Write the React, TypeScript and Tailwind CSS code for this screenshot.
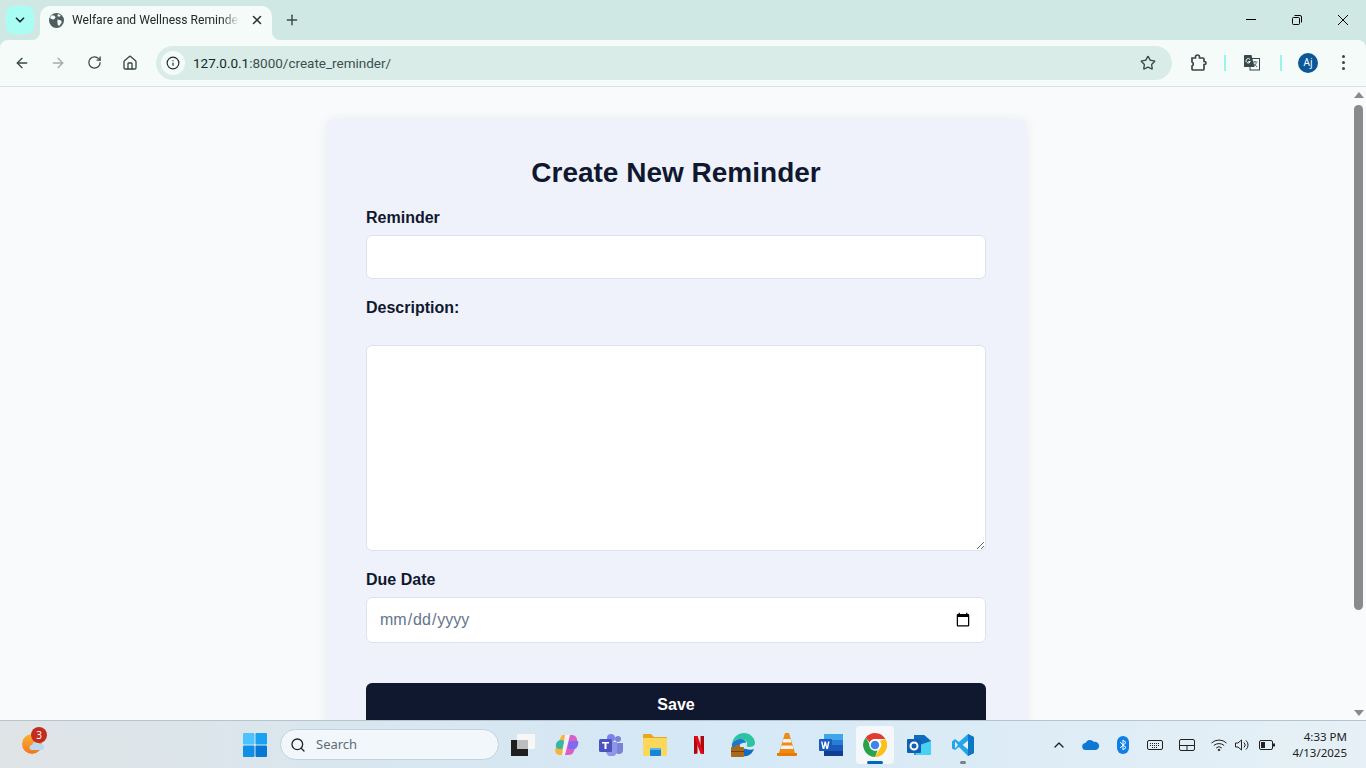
// Chrome window with the create reminder form, on a Windows 11 taskbar

import type { ReactNode } from 'react';
import { Star, Search, ChevronDown, ChevronUp, X, Plus, ArrowLeft, ArrowRight, RotateCw, Home, Info } from 'lucide-react';

const font = { sans: 'font-["Liberation_Sans",Arial,sans-serif]', ui: 'font-["Noto_Sans","Open_Sans",sans-serif]' };

function BrowserChrome() {
  return (
    <header className="shrink-0 text-[#1f2d2d] bg-[#cfe8e3]">
      {/* Tab strip */}
      <div className="h-10 flex items-start pl-[6px]">
        <button className="w-[28px] h-[28px] mt-[6px] rounded-lg bg-[#a9fdf3] flex items-center justify-center">
          <ChevronDown size={14} strokeWidth={3} className="text-[#1b2a2a]" />
        </button>
        <div className="relative ml-[6px] mt-[6px] w-[232px] h-[34px] bg-[#f5fbf9] rounded-t-[10px] flex items-center pl-[8px] pr-[8px] pb-[6px]">
          <svg width="8" height="8" viewBox="0 0 8 8" className="absolute left-[-8px] bottom-0"><path d="M8 0v8H0a8 8 0 0 0 8-8z" fill="#f5fbf9" /></svg>
          <svg width="8" height="8" viewBox="0 0 8 8" className="absolute right-[-8px] bottom-0"><path d="M0 0v8h8a8 8 0 0 1-8-8z" fill="#f5fbf9" /></svg>
          <svg width="15" height="15" viewBox="0 0 16 16" className="ml-[1px] shrink-0">
            <circle cx="8" cy="8" r="8" fill="#4f5d5f" />
            <path d="M3 2.500l3 .5 1 2-2 2-2.500-.5L1 5zM9 7l4 1 .5 2.500-2.500 3-1.500-.5-.5-3zM9.500 1l3 1.500L11.500 4 9 3.500z" fill="#f5fbf9" />
          </svg>
          <span className="ml-[8px] w-[167px] overflow-hidden whitespace-nowrap text-[12.1px] text-[#202a2a] font-['Roboto',sans-serif] [mask-image:linear-gradient(to_right,black_90%,transparent)]">
            Welfare and Wellness Reminder
          </span>
          <X size={14} strokeWidth={2.6} className="ml-auto text-[#263434]" />
        </div>
        <Plus size={16} strokeWidth={2.2} className="ml-[12px] mt-[12px] text-[#3b4c4c]" />
        {/* Window controls */}
        <div className="ml-auto flex items-center h-10 text-black">
          <svg width="10" height="10" viewBox="0 0 10 10" className="mr-[36px]"><path d="M0 4.500h10" stroke="currentColor" strokeWidth="1" /></svg>
          <svg width="10" height="10" viewBox="0 0 10 10" className="mr-[36px]" fill="none" stroke="currentColor"><rect x=".5" y="2.500" width="7" height="7" rx="1" /><path d="M2.500 .5h5.500a1.500 1.500 0 0 1 1.500 1.500v5.500" /></svg>
          <svg width="10" height="10" viewBox="0 0 10 10" className="mr-[18px]"><path d="M0 0l10 10M10 0L0 10" stroke="currentColor" strokeWidth="1" /></svg>
        </div>
      </div>
      {/* Toolbar */}
      <div className="h-[47px] bg-[#f5fbf9] rounded-t-[8px] border-b border-[#d5e2df] flex items-center pl-[14px] pb-[1px]">
        <ArrowLeft size={16} strokeWidth={2} className="text-[#37474a]" />
        <ArrowRight size={16} strokeWidth={2} className="ml-[20px] text-[#a4acac]" />
        <RotateCw size={15} strokeWidth={2} className="ml-[21px] text-[#37474a]" />
        <Home size={16} strokeWidth={2} className="ml-[20px] text-[#37474a]" />
        <div className="ml-[18px] w-[1016px] h-[34px] rounded-full bg-[#d9ece7] flex items-center pl-[5px]">
          <span className="w-6 h-6 rounded-full bg-[#f5fbf9] flex items-center justify-center">
            <Info size={14} strokeWidth={2} className="text-[#1f2a2a]" />
          </span>
          <span className="ml-[8px] pt-[1px] text-[13.5px] text-[#16282a] font-['Roboto',sans-serif]">
            127.0.0.1<span className="text-[#3d5050]">:8000/create_reminder/</span>
          </span>
          <Star size={16} strokeWidth={2} className="ml-auto mr-[16px] text-[#37474a]" />
        </div>
        {/* Extensions */}
        <svg width="17" height="17" viewBox="0 0 17 17" className="ml-[18px]" fill="none" stroke="#37474a" strokeWidth="1.700">
          <path d="M2 4h3.500V3a2 2 0 0 1 4 0v1H13a1 1 0 0 1 1 1v2.500h.5a1.500 1.500 0 0 1 0 3H14V15a1 1 0 0 1-1 1H3a1 1 0 0 1-1-1v-3a2.200 2.200 0 0 0 0-4z" />
        </svg>
        <span className="ml-[17px] w-[2px] h-4 bg-[#9df3e8]" />
        <svg width="17" height="17" viewBox="0 0 17 17" className="ml-[17px]">
          <rect x="7" y="4.500" width="9.500" height="11.500" fill="#f5fbf9" stroke="#37474a" />
          <path d="M9.500 8h5M12 7v1M10 13l3.500-4M11 9.500l3 3.500" stroke="#37474a" strokeWidth=".8" fill="none" />
          <path d="M1.500 1h7l3 12H1.500a.5.5 0 0 1-.5-.5V1.500z" fill="#37474a" />
          <path d="M7 5.500a2.200 2.200 0 1 0 .3 2h-2" stroke="#f5fbf9" strokeWidth="1" fill="none" />
        </svg>
        <span className="ml-[20px] w-[2px] h-4 bg-[#9df3e8]" />
        <span className={`ml-[16px] w-5 h-5 rounded-full bg-[#0b5798] text-white text-[10px] flex items-center justify-center ${font.ui}`}>Aj</span>
        <span className="ml-[24px] flex flex-col gap-[3px]">
          <span className="w-[3px] h-[3px] rounded-full bg-[#37474a]" />
          <span className="w-[3px] h-[3px] rounded-full bg-[#37474a]" />
          <span className="w-[3px] h-[3px] rounded-full bg-[#37474a]" />
        </span>
      </div>
    </header>
  );
}

function ReminderForm() {
  const field = 'block w-full bg-white border border-[#dce1f5] rounded-md outline-none';
  return (
    <form className={`ml-[326px] mt-8 w-[701px] shrink-0 bg-[#eff2fb] rounded-lg shadow-[0_0_12px_rgba(0,0,0,0.06)] pl-10 pr-[41px] pt-[35px] pb-10 ${font.sans}`}>
      <h1 className="text-[28px] leading-[38px] font-bold text-center text-[#10182f]">Create New Reminder</h1>
      <label className="block mt-[17px] text-base leading-[18px] font-bold text-[#10182f]">Reminder</label>
      <input type="text" className={`${field} mt-[8px] h-11`} />
      <label className="block mt-[20px] text-base leading-[18px] font-bold text-[#10182f]">Description:</label>
      <textarea className={`${field} mt-[28px] h-[206px]`} />
      <label className="block mt-[20px] text-base leading-[18px] font-bold text-[#10182f]">Due Date</label>
      <input type="date" defaultValue="" className={`${field} mt-[8px] h-[46px] px-3 text-base text-[#64748b]`} />
      <button type="button" className="block w-full mt-10 h-11 rounded-md bg-[#10182f] text-white text-base font-bold">Save</button>
    </form>
  );
}

function Scrollbar() {
  return (
    <div className="w-[15px] shrink-0 bg-[#f9fafb] flex flex-col items-center">
      <span className="mt-[5px] w-0 h-0 border-x-[5px] border-x-transparent border-b-[6px] border-b-[#8a8a8a]" />
      <span className="mt-[7px] w-[9px] h-[505px] rounded-full bg-[#8a8a8a]" />
      <span className="mt-auto mb-[4px] w-0 h-0 border-x-[5px] border-x-transparent border-t-[6px] border-t-[#8a8a8a]" />
    </div>
  );
}

function Slot({ children }: { children: ReactNode }) {
  return <div className="relative w-[44px] h-[38px] flex items-center justify-center">{children}</div>;
}

function TaskIcons() {
  return (
    <div className="ml-[2px] flex items-center">
      {/* Task view */}
      <Slot>
        <svg width="24" height="22" viewBox="0 0 24 22">
          <rect x="0" y="6" width="17" height="16" fill="#1f1f1f" />
          <rect x="6" y="0" width="18" height="15" rx="1" fill="#f7f7f7" />
          <rect x="6" y="6" width="11" height="9" fill="#bdbdbd" />
        </svg>
      </Slot>
      {/* Copilot */}
      <Slot>
        <svg width="24" height="24" viewBox="0 0 24 24">
          <path d="M7 2h7l-5 20H5C1 22-1 18 1 14z" fill="#f5b43a" />
          <path d="M1 14C0 10 3 7 6 7l4 1-3 8H3z" fill="#35b6a6" />
          <path d="M10 2h7c4 0 6 4 5 8l-3 8c-1 3-3 4-6 4h-3z" fill="#d95fc4" />
          <path d="M14 8h9c1 3-1 8-4 8h-6z" fill="#7d6cf0" />
          <path d="M10 2h5L10 22H7z" fill="#f1f1f8" />
        </svg>
      </Slot>
      {/* Teams */}
      <Slot>
        <svg width="24" height="22" viewBox="0 0 24 22">
          <circle cx="19" cy="5" r="3" fill="#7b83d6" />
          <circle cx="12" cy="4" r="4" fill="#7b83eb" />
          <path d="M16 9h8v7a4 4 0 0 1-8 0z" fill="#7b83d6" />
          <path d="M7 8h11v9a5 5 0 0 1-11 0z" fill="#8f96e8" />
          <rect x="0" y="5" width="13" height="13" rx="1.500" fill="#4b53bc" />
          <path d="M3 8h7v1.500H7.500V15h-2V9.500H3z" fill="#fff" />
        </svg>
      </Slot>
      {/* Explorer */}
      <Slot>
        <svg width="24" height="22" viewBox="0 0 24 22">
          <path d="M0 1a1 1 0 0 1 1-1h7l3 3h12a1 1 0 0 1 1 1v2H0z" fill="#e6a91c" />
          <rect x="0" y="4" width="24" height="18" rx="1" fill="#fbd75b" />
          <rect x="7" y="14" width="11" height="8" rx="1" fill="#1684d8" />
          <rect x="7" y="14" width="11" height="2" fill="#53b4ee" />
        </svg>
      </Slot>
      {/* Netflix */}
      <Slot>
        <svg width="10" height="18" viewBox="0 0 10 18">
          <path d="M0 0h3.500v17.500L0 18z" fill="#b1060f" />
          <path d="M6.500 0H10v18l-3.500-.5z" fill="#b1060f" />
          <path d="M0 0h3.500L10 18l-3.500-.5z" fill="#e50914" />
        </svg>
      </Slot>
      {/* Edge */}
      <Slot>
        <svg width="24" height="24" viewBox="0 0 24 24">
          <path d="M1 11C2 4 7 0 13 0c6 0 11 5 11 10 0 3-3 4-6 4-2 0-3-1-2-2 1-3-2-6-6-6-4 0-8 2-9 5z" fill="#2cc4a0" />
          <path d="M1 11c1-3 5-5 9-5 3 0 5 2 5 4-4-1-8 2-8 6 0 2 1 4 3 6-6-1-10-6-9-11z" fill="#1a78cf" />
          <path d="M23 16c-2 5-6 8-11 7-3-1-5-4-5-7 0-1 4-1 8 0 3 1 6 1 8 0z" fill="#0f6cc0" />
          <rect x="0" y="14" width="13" height="10" rx="1" fill="#a9691c" />
          <rect x="0" y="18" width="13" height="1" fill="#6e4210" />
          <rect x="4" y="12" width="5" height="2" fill="#a9691c" />
        </svg>
      </Slot>
      {/* VLC */}
      <Slot>
        <svg width="20" height="23" viewBox="0 0 20 23">
          <path d="M8 0h4l6 20H2z" fill="#f08a12" />
          <path d="M6.500 6h7l1 3.500h-9zM4.500 12.500h11l1 3.500H3.500z" fill="#f3f3f3" />
          <path d="M0 20h20v2a1 1 0 0 1-1 1H1a1 1 0 0 1-1-1z" fill="#e67b0a" />
        </svg>
      </Slot>
      {/* Word */}
      <Slot>
        <svg width="24" height="22" viewBox="0 0 24 22">
          <rect x="5" y="0" width="19" height="22" rx="1" fill="#2b7cd3" />
          <rect x="5" y="0" width="19" height="6" fill="#41a5ee" />
          <rect x="5" y="11" width="19" height="6" fill="#185abd" />
          <rect x="5" y="17" width="19" height="5" fill="#103f91" />
          <rect x="0" y="5" width="13" height="12" rx="1" fill="#185abd" />
          <path d="M2 7.500h1.500l1 5 1-5H7l1 5 1-5h1.500L9 15H7.300l-1-4-1 4H3.700z" fill="#fff" />
        </svg>
      </Slot>
      {/* Chrome, the running and focused one */}
      <Slot>
        <div className="relative w-[38px] h-[38px] rounded bg-[#f4f8fb] flex items-center justify-center">
          <svg width="24" height="24" viewBox="0 0 24 24">
            <path d="M12 0a12 12 0 0 1 10.400 6H12a6 6 0 0 0-5.500 3.500L2.800 4.500A12 12 0 0 1 12 0z" fill="#e33b2e" />
            <path d="M22.400 6A12 12 0 0 1 12 24l4.800-8.500A6 6 0 0 0 17 8z" fill="#fbc116" />
            <path d="M12 24A12 12 0 0 1 2.800 4.500l4.700 8.500a6 6 0 0 0 7 4.500z" fill="#2aa24a" />
            <circle cx="12" cy="12" r="5" fill="#3f84ea" stroke="#fff" strokeWidth="1.500" />
          </svg>
          <span className="absolute bottom-0 left-[11px] w-4 h-[3px] rounded-full bg-[#0067c0]" />
        </div>
      </Slot>
      {/* Outlook */}
      <Slot>
        <svg width="24" height="22" viewBox="0 0 24 22">
          <path d="M7 1h10l7 6v12a2 2 0 0 1-2 2H7z" fill="#1a9ad6" />
          <path d="M7 1h10l7 6-8 5-9-5z" fill="#0f6cbd" />
          <path d="M7 13l17-6v12a2 2 0 0 1-2 2H9z" fill="#49d0f2" />
          <rect x="0" y="5" width="14" height="14" rx="1" fill="#0f5fb4" />
          <circle cx="7" cy="12" r="3.500" fill="none" stroke="#fff" strokeWidth="2" />
        </svg>
      </Slot>
      {/* VS Code */}
      <Slot>
        <svg width="24" height="24" viewBox="0 0 24 24">
          <path d="M17 1l6 3v16l-6 3-9-9-4 3-3-1.500v-7L4 6l4 3z" fill="#23a5ea" />
          <path d="M17 1l6 3v16l-6 3V16.500L11.500 12 17 7.500z" fill="#0a78c4" />
          <path d="M4 8.500L7 12l-3 3.500z" fill="#e6f0f6" />
          <path d="M17 7.500L11.500 12l5.500 4.500z" fill="#e6f0f6" />
        </svg>
        <span className="absolute bottom-0 left-[19px] w-[6px] h-[3px] rounded-full bg-[#7b8087]" />
      </Slot>
    </div>
  );
}

function Taskbar() {
  return (
    <footer className="relative shrink-0 h-[48px] border-t border-[#b6c4ce] bg-gradient-to-r from-[#dfe4e6] via-[#d4e8f6] to-[#e6f0f6] flex items-center">
      {/* Weather widget */}
      <div className="relative ml-[22px] w-6 h-6">
        <span className="absolute left-0 top-[1px] w-[20px] h-[20px] rounded-full bg-gradient-to-b from-[#f9b233] to-[#f2761d]" />
        <svg width="16" height="10" viewBox="0 0 16 10" className="absolute left-[7px] top-[8px]">
          <path d="M3 9a2.500 2.500 0 0 1 0-5 4 4 0 0 1 7.500-1A3 3 0 0 1 13 9z" fill="#bcd7f2" />
        </svg>
        <span className="absolute left-[9px] top-[-6px] w-4 h-4 rounded-full bg-[#c42b1c] text-white text-[10px] leading-4 text-center font-['Noto_Sans',sans-serif]">3</span>
      </div>
      {/* Start */}
      <svg width="24" height="24" viewBox="0 0 24 24" className="ml-[197px]">
        <rect x="0" y="0" width="11.500" height="11.500" rx="1" fill="#4cc2ff" />
        <rect x="12.500" y="0" width="11.500" height="11.500" rx="1" fill="#1aa1ef" />
        <rect x="0" y="12.500" width="11.500" height="11.500" rx="1" fill="#0f8fe6" />
        <rect x="12.500" y="12.500" width="11.500" height="11.500" rx="1" fill="#0678d4" />
      </svg>
      <div className="ml-[13px] w-[219px] h-[31px] rounded-full bg-[#f1f7fb] border border-[#bfd3e2] flex items-center pl-[9px]">
        <Search size={16} strokeWidth={2} className="text-[#222]" />
        <span className={`ml-[10px] text-[13px] text-[#5f6b73] ${font.ui}`}>Search</span>
      </div>
      <TaskIcons />
      {/* Tray */}
      <div className="ml-auto flex items-center text-[#222]">
        <ChevronUp size={16} strokeWidth={2} />
        <svg width="18" height="12" viewBox="0 0 18 12" className="ml-[15px]">
          <path d="M4 11a3.500 3.500 0 0 1-.5-7A5 5 0 0 1 12 3a4 4 0 0 1 2 8z" fill="#0f78d4" />
        </svg>
        <span className="ml-[17px] w-3 h-[18px] rounded-full bg-[#0f7fe6] flex items-center justify-center">
          <svg width="8" height="12" viewBox="0 0 8 12"><path d="M1 3l6 5.500L4 11V1l3 2.500L1 9" fill="none" stroke="#fff" strokeWidth="1" /></svg>
        </span>
        <svg width="16" height="12" viewBox="0 0 16 12" className="ml-[18px]" fill="none" stroke="#222">
          <rect x=".5" y="1.500" width="15" height="9" rx="1.500" />
          <path d="M3 4.500h10M3 6.500h10M5 8.500h6" strokeDasharray="1 1" />
        </svg>
        <svg width="16" height="12" viewBox="0 0 16 12" className="ml-[16px]" fill="none" stroke="#222">
          <rect x=".5" y=".5" width="15" height="11" rx="1.500" />
          <path d="M.5 6.500h15M8 6.500v5" />
        </svg>
        <svg width="16" height="12" viewBox="0 0 16 12" className="ml-[16px]" fill="none" stroke="#222">
          <path d="M.5 4a11 11 0 0 1 15 0M2.800 6.500a8 8 0 0 1 10.400 0M5.200 9a4 4 0 0 1 5.600 0" />
          <circle cx="8" cy="11" r=".8" fill="#222" />
        </svg>
        <svg width="15" height="12" viewBox="0 0 15 12" className="ml-[8px]" fill="none" stroke="#222">
          <path d="M.5 4v4h2.500l3.500 3V1L3 4zM9 3.500a3.500 3.500 0 0 1 0 5M11 1.500a6 6 0 0 1 0 9" />
        </svg>
        <svg width="16" height="10" viewBox="0 0 16 10" className="ml-[9px]" fill="none" stroke="#222">
          <rect x=".5" y=".5" width="13" height="9" rx="1.500" />
          <rect x="2" y="2" width="4" height="6" fill="#222" stroke="none" />
          <rect x="14" y="3.500" width="2" height="3" fill="#222" stroke="none" />
        </svg>
        <div className={`ml-[17px] mr-[19px] text-right text-[11.5px] leading-[16px] text-[#222] ${font.ui}`}>
          <div>4:33 PM</div>
          <div>4/13/2025</div>
        </div>
      </div>
    </footer>
  );
}

export default function App() {
  return (
    <div className="w-[1366px] h-[768px] overflow-hidden flex flex-col">
      <BrowserChrome />
      <div className="flex-1 min-h-0 flex bg-[#f9fafb] overflow-hidden">
        <main className="flex-1 min-h-0 overflow-hidden flex flex-col">
          <ReminderForm />
        </main>
        <Scrollbar />
      </div>
      <Taskbar />
    </div>
  );
}
